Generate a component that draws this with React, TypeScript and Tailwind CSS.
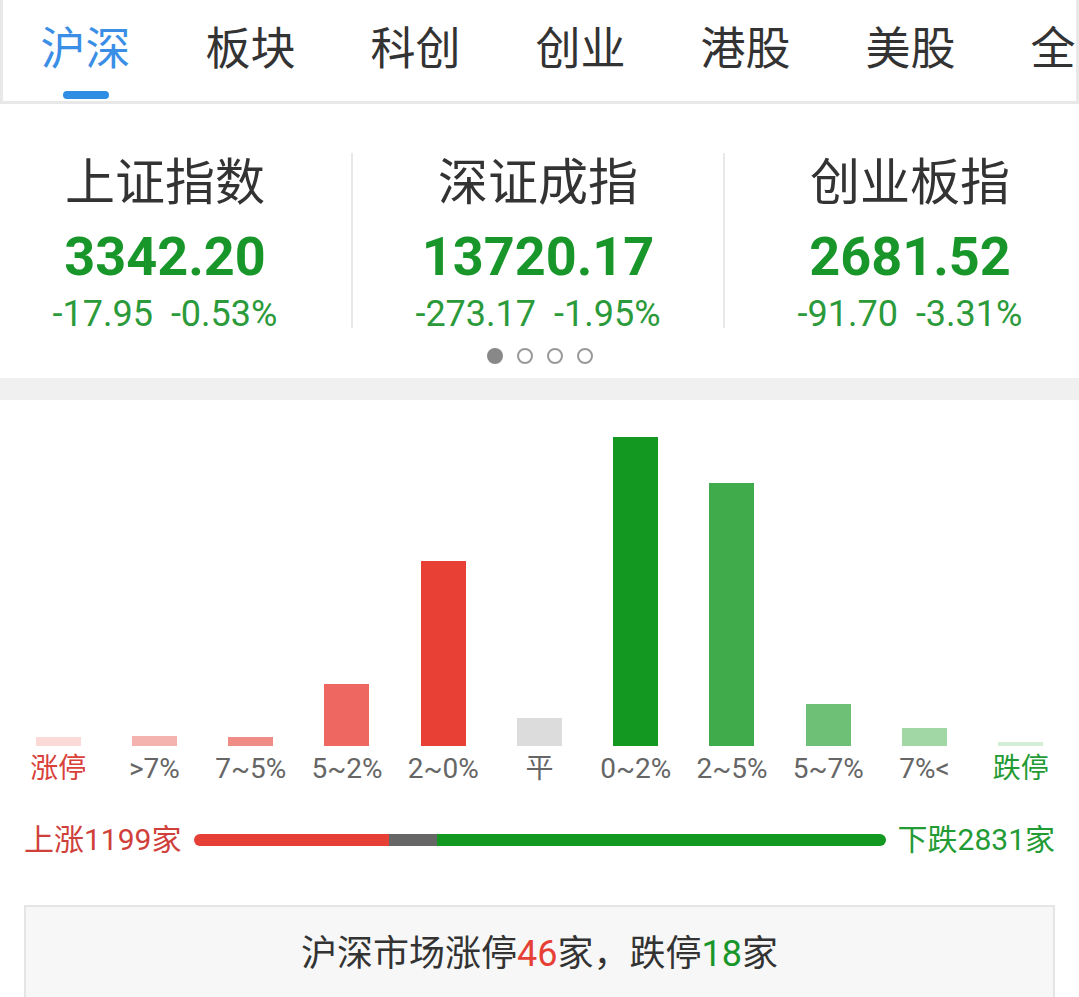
import React from 'react';

const tabs = ['沪深', '板块', '科创', '创业', '港股', '美股', '全球'];

const indices = [
  { name: '上证指数', value: '3342.20', change: '-17.95', pct: '-0.53%' },
  { name: '深证成指', value: '13720.17', change: '-273.17', pct: '-1.95%' },
  { name: '创业板指', value: '2681.52', change: '-91.70', pct: '-3.31%' },
];

const bars = [
  { label: '涨停', h: 9, color: 'bg-[#fbd9d7]', text: 'text-[#d9413a]' },
  { label: '>7%', h: 10, color: 'bg-[#f5b3af]', text: 'text-[#666666]' },
  { label: '7~5%', h: 9, color: 'bg-[#f08c86]', text: 'text-[#666666]' },
  { label: '5~2%', h: 62, color: 'bg-[#ee6760]', text: 'text-[#666666]' },
  { label: '2~0%', h: 185, color: 'bg-[#e94036]', text: 'text-[#666666]' },
  { label: '平', h: 28, color: 'bg-[#dcdcdc]', text: 'text-[#666666]' },
  { label: '0~2%', h: 309, color: 'bg-[#139822]', text: 'text-[#666666]' },
  { label: '2~5%', h: 263, color: 'bg-[#3fab4a]', text: 'text-[#666666]' },
  { label: '5~7%', h: 42, color: 'bg-[#6fc077]', text: 'text-[#666666]' },
  { label: '7%<', h: 18, color: 'bg-[#a1d6a5]', text: 'text-[#666666]' },
  { label: '跌停', h: 4, color: 'bg-[#d4eed6]', text: 'text-[#239b34]' },
];

export default function App() {
  return (
    <div
      className="w-[1079px] h-[997px] overflow-hidden bg-white"
      style={{ fontFamily: 'Roboto, "Noto Sans CJK SC", sans-serif' }}
    >
      {/* tabs */}
      <div className="h-[104px] border-x-[3px] border-b-[3px] border-[#e8e8e8] flex overflow-hidden">
        {tabs.map((t, i) => (
          <div key={t} className="w-[165px] shrink-0 flex flex-col items-center pt-[22px]">
            <span
              className={`text-[45px] leading-[56px] whitespace-nowrap ${i === 0 ? 'text-[#3a8ee6]' : 'text-[#333333]'}`}
            >
              {t}
            </span>
            {i === 0 && <div className="mt-[13px] w-[46px] h-[8px] rounded-full bg-[#2f8de4]" />}
          </div>
        ))}
      </div>

      {/* indices */}
      <div className="h-[274px] overflow-hidden flex flex-col">
        <div className="flex -ml-[21px] pt-[49px]">
          {indices.map((x, i) => (
            <div
              key={x.name}
              className={`w-[372px] shrink-0 flex flex-col items-center h-[175px] ${i > 0 ? 'border-l-2 border-[#e8e8e8]' : ''}`}
            >
              <div className="text-[50px] leading-[58px] text-[#333333] mt-[1px]">{x.name}</div>
              <div className="text-[54px] leading-[64px] font-bold text-[#18962a] mt-[13px]">{x.value}</div>
              <div className="text-[36px] leading-[42px] text-[#2b9a3a] mt-[4px] flex gap-[18px]">
                <span>{x.change}</span>
                <span>{x.pct}</span>
              </div>
            </div>
          ))}
        </div>
        <div className="flex justify-center gap-[14px] mt-[20px]">
          <span className="w-[16px] h-[16px] rounded-full bg-[#888888]" />
          <span className="w-[16px] h-[16px] rounded-full border-2 border-[#999999]" />
          <span className="w-[16px] h-[16px] rounded-full border-2 border-[#999999]" />
          <span className="w-[16px] h-[16px] rounded-full border-2 border-[#999999]" />
        </div>
      </div>
      <div className="h-[22px] bg-[#f0f0f0]" />

      {/* distribution chart */}
      <div className="px-[10px] pt-[37px] h-[346px] flex items-end">
        {bars.map((b) => (
          <div key={b.label} className="flex-1 flex justify-center">
            <div className={`w-[45px] ${b.color}`} style={{ height: b.h }} />
          </div>
        ))}
      </div>
      <div className="px-[10px] flex mt-[4px]">
        {bars.map((b) => (
          <div key={b.label} className={`flex-1 text-center text-[28px] leading-[38px] ${b.text}`}>
            {b.label}
          </div>
        ))}
      </div>

      {/* up/down ratio */}
      <div className="flex items-center mt-[32px] pl-[24px] pr-[24px] h-[40px]">
        <span className="text-[30px] text-[#d0403a] leading-[40px]">上涨1199家</span>
        <div className="ml-[13px] flex-1 h-[12px] rounded-full overflow-hidden flex">
          <div className="w-[195px] bg-[#e63f35]" />
          <div className="w-[48px] bg-[#666666]" />
          <div className="flex-1 bg-[#139822]" />
        </div>
        <span className="ml-[12px] text-[30px] text-[#239b34] leading-[40px]">下跌2831家</span>
      </div>

      {/* limit summary */}
      <div className="mx-[24px] mt-[45px] h-[120px] border-2 border-[#e5e5e5] bg-[#f7f7f7] flex justify-center pt-[22px]">
        <span className="text-[36px] leading-[50px] text-[#333333]">
          沪深市场涨停<span className="text-[#e63f35]">46</span>家，跌停
          <span className="text-[#18962a]">18</span>家
        </span>
      </div>
    </div>
  );
}
